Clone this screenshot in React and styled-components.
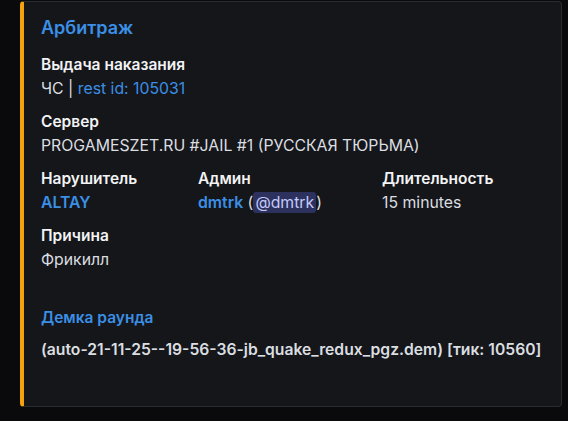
import React from 'react';
import styled, { createGlobalStyle } from 'styled-components';

const GlobalStyle = createGlobalStyle`
  html, body {
    margin: 0;
    padding: 0;
    background: #0a0a0c;
  }
  body {
    font-family: Inter, "Noto Sans", "Liberation Sans", sans-serif;
    -webkit-font-smoothing: antialiased;
  }
`;

const fields = [
  { name: 'Выдача наказания', value: 'punish' },
  { name: 'Сервер', value: 'PROGAMESZET.RU #JAIL #1 (РУССКАЯ ТЮРЬМА)' },
  { name: 'Нарушитель', value: 'violator', inline: true },
  { name: 'Админ', value: 'admin', inline: true },
  { name: 'Длительность', value: '15 minutes', inline: true },
  { name: 'Причина', value: 'Фрикилл' },
];

const App = () => {
  const renderValue = (v) => {
    if (v === 'punish') {
      return (
        <>
          ЧС | <Link>rest id: 105031</Link>
        </>
      );
    }
    if (v === 'violator') return <Strong>ALTAY</Strong>;
    if (v === 'admin') {
      return (
        <>
          <Strong>dmtrk</Strong> (<Mention>@dmtrk</Mention>)
        </>
      );
    }
    return v;
  };

  return (
    <Page>
      <GlobalStyle />
      <Embed>
        <Title>Арбитраж</Title>
        <Fields>
          {fields.map((f) => (
            <Field key={f.name} $inline={f.inline}>
              <FieldName>{f.name}</FieldName>
              <FieldValue>{renderValue(f.value)}</FieldValue>
            </Field>
          ))}
        </Fields>
        <Demo>
          <DemoTitle>Демка раунда</DemoTitle>
          <DemoValue>(auto-21-11-25--19-56-36-jb_quake_redux_pgz.dem) [тик: 10560]</DemoValue>
        </Demo>
      </Embed>
    </Page>
  );
};

export default App;

const Page = styled.div`
  padding: 1px 6px 14px 20px;
  width: 542px;
`;

const Embed = styled.div`
  box-sizing: border-box;
  height: 406px;
  background: #151619;
  border: 1px solid #2a2b2f;
  border-left: 4px solid #f5a30a;
  border-radius: 4px;
  padding: 15px 16px 16px 17px;
  display: flex;
  flex-direction: column;
`;

const Title = styled.div`
  font-size: 18px;
  line-height: 22px;
  font-weight: 600;
  color: #3b8fe6;
`;

const Fields = styled.div`
  margin-top: 16px;
  display: grid;
  grid-template-columns: 157px 184px 1fr;
  row-gap: 13px;
`;

const Field = styled.div`
  grid-column: ${(p) => (p.$inline ? 'auto' : '1 / -1')};
  display: flex;
  flex-direction: column;
  gap: 4px;
`;

const FieldName = styled.div`
  font-size: 15.5px;
  line-height: 20px;
  font-weight: 600;
  color: #f2f3f5;
`;

const FieldValue = styled.div`
  font-size: 15.8px;
  line-height: 20px;
  color: #dbdee1;
  white-space: nowrap;
`;

const Link = styled.span`
  color: #3b8fe6;
`;

const Strong = styled.span`
  color: #3b8fe6;
  font-weight: 600;
`;

const Mention = styled.span`
  background: #2c315d;
  color: #c3c9fa;
  border-radius: 3px;
  padding: 1px 2px;
`;

const Demo = styled.div`
  margin-top: 38px;
  display: flex;
  flex-direction: column;
  gap: 12px;
`;

const DemoTitle = styled.div`
  font-size: 15.5px;
  line-height: 20px;
  font-weight: 600;
  color: #3b8fe6;
`;

const DemoValue = styled.div`
  font-size: 15.7px;
  line-height: 20px;
  font-weight: 600;
  color: #dbdee1;
  white-space: nowrap;
`;
